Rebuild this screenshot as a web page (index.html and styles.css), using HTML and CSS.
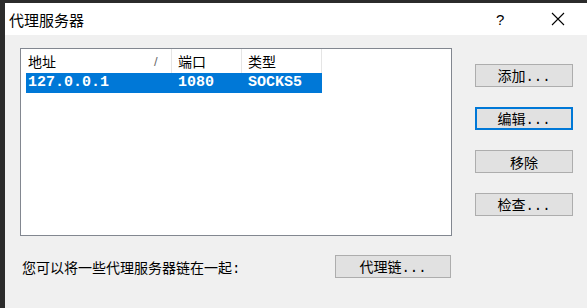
FILE: index.html
```html
<!DOCTYPE html>
<html lang="zh-CN">
<head>
    <meta charset="UTF-8">
    <meta name="viewport" content="width=device-width, initial-scale=1.0">
    <title>代理服务器</title>
    <link rel="stylesheet" href="styles.css">
</head>
<body>
    <div class="window">
        <div class="titlebar">
            <span class="title">代理服务器</span>
            <span class="help">?</span>
            <span class="close">
                <svg width="14" height="14" viewBox="0 0 14 14">
                    <path d="M1 1 L13 13 M13 1 L1 13" stroke="#000" stroke-width="1.1" fill="none"/>
                </svg>
            </span>
        </div>
        <div class="content">
            <div class="main">
                <div class="listbox">
                    <div class="list-header">
                        <div class="hcell first">地址<span class="sort">/</span></div>
                        <div class="hcell">端口</div>
                        <div class="hcell">类型</div>
                    </div>
                    <div class="list-row selected">
                        <div class="cell first">127.0.0.1</div>
                        <div class="cell">1080</div>
                        <div class="cell">SOCKS5</div>
                    </div>
                </div>
                <div class="chain-row">
                    <span class="chain-label">您可以将一些代理服务器链在一起<span class="mono">:</span></span>
                    <button class="btn chain">代理链<span class="dots">...</span></button>
                </div>
            </div>
            <div class="side">
                <button class="btn">添加<span class="dots">...</span></button>
                <button class="btn focused">编辑<span class="dots">...</span></button>
                <button class="btn">移除</button>
                <button class="btn">检查<span class="dots">...</span></button>
            </div>
        </div>
    </div>
</body>
</html>
```

FILE: styles.css
```css
body {
    margin: 0;
    padding: 0;
    background-color: #2b2b2b;
    font-family: "Noto Sans CJK SC", "Liberation Sans", sans-serif;
    font-size: 14px;
    color: #000;
    overflow: hidden;
}
.window {
    margin: 3px 0 0 5px;
    height: 305px;
    background-color: #f0f0f0;
    display: flex;
    flex-direction: column;
}
.titlebar {
    height: 32px;
    background-color: #fff;
    display: flex;
    align-items: center;
    padding-left: 4px;
}
.title {
    font-size: 15px;
    flex: 1;
    line-height: 1;
}
.help {
    font-family: "Liberation Sans", sans-serif;
    font-size: 15px;
    width: 54px;
    line-height: 1;
}
.close {
    width: 36px;
    display: flex;
    padding-left: 1px;
}
.content {
    display: flex;
    padding: 13px 0 0 15px;
}
.main {
    width: 432px;
}
.listbox {
    height: 186px;
    border: 1px solid #828790;
    background-color: #fff;
}
.list-header {
    display: grid;
    grid-template-columns: 151px 70px 80px;
    height: 24px;
}
.hcell {
    border-right: 1px solid #e5e5e5;
    padding-left: 6px;
    line-height: 24px;
    position: relative;
}
.hcell.first {
    padding-left: 7px;
}
.sort {
    position: absolute;
    left: 133px;
    top: 1px;
    font-family: "Liberation Sans", sans-serif;
    font-size: 13px;
    color: #6d6d6d;
}
.list-row {
    display: grid;
    grid-template-columns: 146px 70px 80px;
    height: 20px;
    margin-left: 5px;
    width: 296px;
}
.list-row.selected {
    background-color: #0078d7;
    color: #fff;
}
.cell {
    font-family: "Liberation Mono", monospace;
    font-size: 15px;
    font-weight: bold;
    line-height: 20px;
    padding-left: 6px;
}
.cell.first {
    padding-left: 2px;
}
.chain-row {
    display: flex;
    align-items: center;
    justify-content: space-between;
    margin-top: 19px;
    padding: 0 1px 0 2px;
}
.mono {
    font-family: "Liberation Mono", monospace;
}
.btn {
    width: 98px;
    height: 23px;
    padding: 0;
    background-color: #e1e1e1;
    border: 1px solid #adadad;
    font-family: "Noto Sans CJK SC", sans-serif;
    font-size: 14px;
    color: #000;
    line-height: 1;
}
.btn.focused {
    border: 2px solid #0078d7;
}
.btn.chain {
    width: 116px;
}
.dots {
    font-family: "Liberation Mono", monospace;
    letter-spacing: 0;
}
.side {
    display: flex;
    flex-direction: column;
    gap: 20px;
    margin-left: 23px;
    padding-top: 16px;
}
```
